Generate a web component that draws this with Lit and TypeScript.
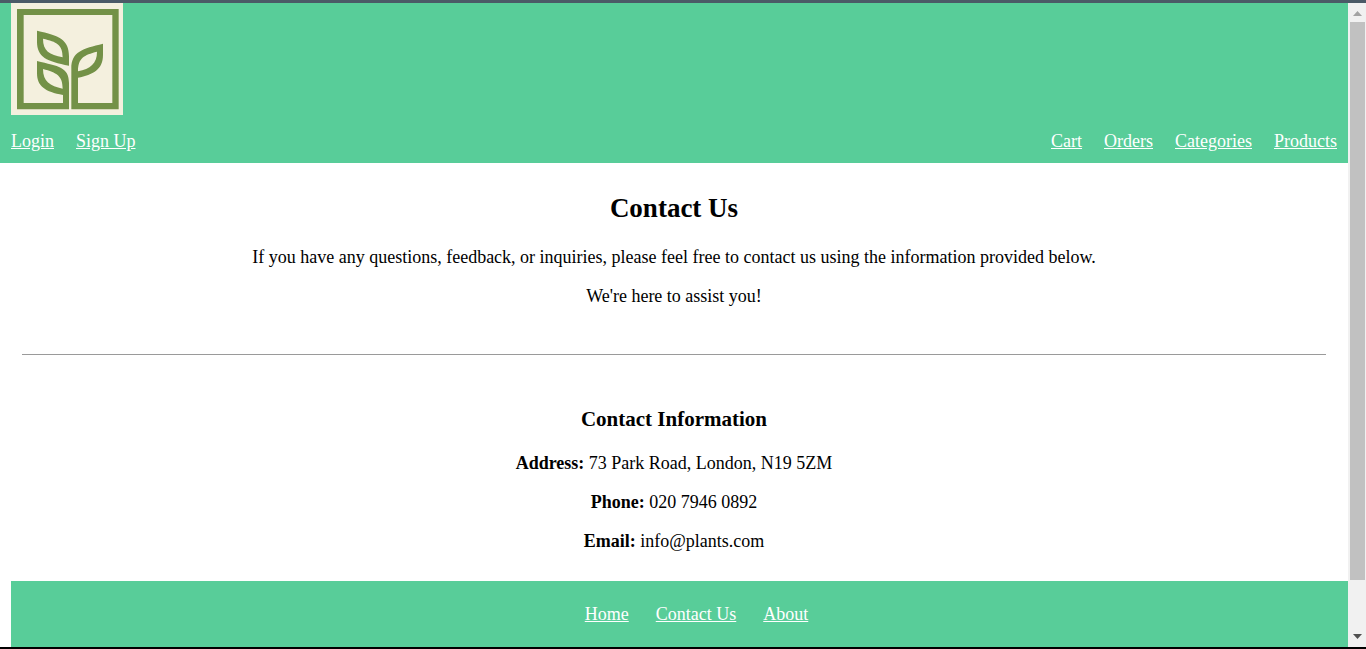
import { LitElement, html, css } from "lit";
import { customElement } from "lit/decorators.js";

@customElement("plant-logo")
class PlantLogo extends LitElement {
  static styles = css`
    :host { display: block; }
    .art { display: block; width: 112px; height: 112px; }
  `;
  render() {
    return html`
      <svg class="art" viewBox="0 0 336 336" role="img" aria-label="Plants">
        <rect width="336" height="336" fill="#f4f0de" />
        <g fill="#739147" fill-rule="evenodd">
          <path d="M18 18 H323 V319 H181 V196 C181 146 215 137 276 122 V155 C276 200 246 215 201 224 V300 H304 V36 H38 V300 H156 V276 C103 266 78 251 78 210 V174 C143 190 174 192 174 240 V319 H18 Z M201 205 C238 197 258 182 258 146 C219 156 201 165 201 205 Z M96 198 C96 236 117 249 155 257 C155 218 137 209 96 198 Z" />
          <path d="M78 83 C145 98 174 109 174 160 V188 C107 175 78 162 78 116 Z M96 107 C96 144 115 155 155 163 C155 125 137 116 96 107 Z" />
        </g>
      </svg>
    `;
  }
}

@customElement("scroll-rail")
class ScrollRail extends LitElement {
  static styles = css`
    :host { display: flex; flex-direction: column; background: #f1f1f1; padding: 0 1px 0 2px; }
    .arrow { display: block; flex: none; width: 15px; height: 19px; }
    .track { flex: 1; display: flex; flex-direction: column; }
    .thumb { flex: 0 0 92%; background: #c1c1c1; }
  `;
  render() {
    return html`
      <svg class="arrow" viewBox="0 0 15 19" aria-hidden="true"><path d="M3 13 7.500 8 12 13Z" fill="#a3a3a3" /></svg>
      <div class="track"><div class="thumb"></div></div>
      <svg class="arrow" viewBox="0 0 15 19" aria-hidden="true"><path d="M3 6 7.500 11 12 6Z" fill="#505050" /></svg>
    `;
  }
}

@customElement("app-root")
class AppRoot extends LitElement {
  static styles = css`
    :host {
      display: grid;
      grid-template-columns: minmax(0, 1fr) 18px;
      box-sizing: border-box;
      height: 100vh;
      border-top: 3px solid #4b5a67;
      border-bottom: 2px solid #000;
      background: #fff;
      color: #000;
      font: 18px/20px "Liberation Serif", "Times New Roman", serif;
    }
    .page { display: flex; flex-direction: column; overflow: hidden; }
    .header { background: #58cd99; padding: 0 11px 12px; }
    .bar { display: flex; justify-content: space-between; padding-top: 16px; }
    .group { display: flex; gap: 22px; }
    a { color: #fff; text-decoration: underline; }
    .main { padding: 0 22px; text-align: center; }
    h2 { margin: 30px 0 24px; font-size: 27px; line-height: 30px; }
    h3 { margin: 52px 0 22px; font-size: 21px; line-height: 24px; }
    p { margin: 0 0 19px; }
    .rule { margin: 48px 0 0; border: 0; border-top: 1px solid #9a9a9a; }
    .footer {
      flex: 1;
      display: flex;
      justify-content: center;
      gap: 27px;
      margin: 11px 0 0 11px;
      padding: 23px 0 22px 34px;
      background: #58cd99;
    }
  `;

  render() {
    return html`
      <div class="page">
        <header class="header">
          <plant-logo></plant-logo>
          <nav class="bar">
            <div class="group"><a href="#login">Login</a><a href="#signup">Sign Up</a></div>
            <div class="group">
              <a href="#cart">Cart</a><a href="#orders">Orders</a><a href="#categories">Categories</a><a href="#products">Products</a>
            </div>
          </nav>
        </header>
        <main class="main">
          <h2>Contact Us</h2>
          <p>If you have any questions, feedback, or inquiries, please feel free to contact us using the information provided below.</p>
          <p>We're here to assist you!</p>
          <hr class="rule" />
          <h3>Contact Information</h3>
          <p><strong>Address:</strong> 73 Park Road, London, N19 5ZM</p>
          <p><strong>Phone:</strong> 020 7946 0892</p>
          <p><strong>Email:</strong> info@plants.com</p>
        </main>
        <footer class="footer">
          <a href="#home">Home</a><a href="#contact">Contact Us</a><a href="#about">About</a>
        </footer>
      </div>
      <scroll-rail></scroll-rail>
    `;
  }
}
